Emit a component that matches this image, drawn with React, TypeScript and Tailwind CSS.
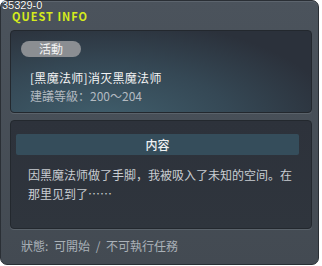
import React from "react"

const font = { fontFamily: '"Noto Sans CJK SC", "Noto Sans CJK TC", "Liberation Sans", sans-serif' }

const QuestInfo = () => {
  return (
    <div className="relative w-[322px] h-[266px] bg-white" style={font}>
      {/* quest id overlay */}
      <span className="absolute left-[2px] top-0 z-10 font-['Liberation_Sans',sans-serif] text-[11px] leading-[10px] text-white [text-shadow:0_0_1px_#000]">
        35329-0
      </span>

      <div className="w-[319px] h-[265px] rounded-[7px] border border-[#2a2f35] bg-gradient-to-b from-[#4b535c] to-[#434a52] shadow-[inset_0_1px_0_#5c646d] flex flex-col">
        {/* title */}
        <div className="pl-[11px] pt-[10px] h-[29px] text-[11px] leading-[10px] font-bold text-[#d6ec1c] tracking-[1px]">
          QUEST INFO
        </div>

        {/* summary panel */}
        <div className="ml-[9px] w-[302px] h-[83px] rounded-[4px] border border-[#23282e] shadow-[0_1px_0_#5a626a] bg-[radial-gradient(ellipse_at_30%_115%,#41606e_0%,#354855_45%,#2b313b_80%)] flex flex-col">
          <div className="ml-[10px] mt-[10px] w-[60px] h-[16px] rounded-full bg-[#8b8e92] flex items-center justify-center text-[12px] leading-none text-[#f2f2f2]">
            活動
          </div>
          <div className="ml-[19px] mt-[13px] text-[12px] leading-[16px] text-[#f4f4f4] tracking-[0.3px]">
            [黑魔法师]消灭黑魔法师
          </div>
          <div className="ml-[19px] mt-[2px] text-[12px] leading-[16px] text-[#b3bac1]">
            建議等級：200～204
          </div>
        </div>

        {/* content panel */}
        <div className="ml-[9px] mt-[7px] w-[302px] h-[109px] rounded-[4px] border border-[#23282e] shadow-[0_1px_0_#5a626a] bg-gradient-to-b from-[#2d323b] to-[#2f353d] flex flex-col">
          <div className="ml-[5px] mt-[13px] w-[283px] h-[21px] rounded-[2px] bg-[#354d5b] flex items-center justify-center text-[12px] font-medium text-[#eef0f2]">
            内容
          </div>
          <div className="ml-[17px] mt-[10px] w-[268px] text-[12px] leading-[19px] text-[#c9cdd2]">
            因黑魔法师做了手脚，我被吸入了未知的空间。在那里见到了……
          </div>
        </div>

        {/* status */}
        <div className="ml-[20px] mt-[9px] text-[12px] leading-[16px] text-[#aab1b8] [word-spacing:3px]">
          狀態: 可開始 / 不可執行任務
        </div>
      </div>
    </div>
  )
}

export default function App() {
  return <QuestInfo />
}
